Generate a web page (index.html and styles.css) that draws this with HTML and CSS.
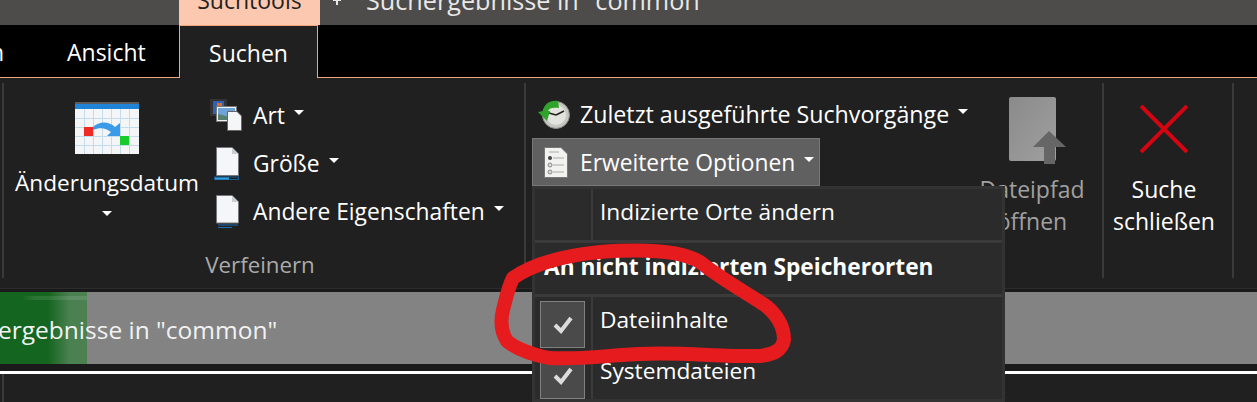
FILE: index.html
```html
<!DOCTYPE html>
<html lang="de">
<head>
    <meta charset="UTF-8">
    <title>Suchtools</title>
    <link rel="stylesheet" href="styles.css">
</head>
<body>
<div class="window">
    <div class="titlebar">
        <div class="context-tab"><span>Suchtools</span></div>
        <svg class="title-mark" width="8" height="5" viewBox="0 0 8 5"><path d="M0 0h8v1H5v4H3V1H0Z" fill="#e8e8e8"/></svg>
        <div class="title-text"><span>Suchergebnisse in "common"</span></div>
    </div>

    <div class="tabs">
        <div class="tab tab-cut">n</div>
        <div class="tab tab-ansicht">Ansicht</div>
        <div class="tab tab-active">Suchen</div>
        <div class="tab-rest"></div>
    </div>

    <div class="ribbon">
        <div class="group group-verfeinern">
            <div class="group-body">
                <div class="big-btn date-btn">
                    <svg class="date-icon" width="64" height="52" viewBox="0 0 64 52">
                        <rect x="0" y="0" width="64" height="52" fill="#f3f5f7"/>
                        <rect x="0" y="0" width="64" height="2" fill="#5b5b5b"/>
                        <rect x="0" y="2" width="64" height="5" fill="#1f83d6"/>
                        <path d="M9.5 7v45M18.5 7v45M27.5 7v45M36.5 7v45M45.5 7v45M54.5 7v45M0 16.5h64M0 25.5h64M0 34.5h64M0 43.5h64" stroke="#c3dcec" fill="none"/>
                        <rect x="9" y="25" width="9" height="9" fill="#ee2a24"/>
                        <rect x="45" y="34" width="9" height="9" fill="#17cb2c"/>
                        <path d="M18 25C24 19 34 19 40 25L45 21V34H32L36 30C31 26 25 25 18 28Z" fill="#3b9be6"/>
                    </svg>
                    <div class="date-label">Änderungsdatum</div>
                    <div class="caret caret-below"></div>
                </div>
                <div class="small-col">
                    <div class="small-btn">
                        <svg class="small-icon" width="32" height="32" viewBox="0 0 32 32">
                            <rect x="0" y="0" width="17" height="17" fill="#333"/>
                            <rect x="3" y="2" width="11" height="13" fill="#2f62b5"/>
                            <rect x="7" y="4" width="5" height="5" fill="#d8702c"/>
                            <rect x="6.5" y="7.5" width="20" height="15" fill="#eef3f8" stroke="#777"/>
                            <rect x="8" y="9" width="17" height="12" fill="#6fa3d8"/>
                            <path d="M8 21L8 15L16 17L25 21Z" fill="#56806f"/>
                            <path d="M17.5 12.5H27L31.5 17V31.5H17.5Z" fill="#f4f6f8" stroke="#666"/>
                        </svg>
                        <span>Art</span><i class="caret"></i>
                    </div>
                    <div class="small-btn">
                        <svg class="small-icon" width="26" height="33" viewBox="0 0 26 33">
                            <path d="M2.5 0.5H18L24.5 7V28.5H2.5Z" fill="#f4f6f9" stroke="#777"/>
                            <path d="M18 0.5V7H24.5Z" fill="#c9ced3"/>
                            <rect x="0.5" y="30" width="24" height="2.5" fill="none" stroke="#1a5c93"/>
                            <rect x="1" y="30.5" width="14" height="2" fill="#2f9fe2"/>
                        </svg>
                        <span>Größe</span><i class="caret"></i>
                    </div>
                    <div class="small-btn">
                        <svg class="small-icon" width="26" height="33" viewBox="0 0 26 33">
                            <path d="M2.5 0.5H18L24.5 7V28H2.5Z" fill="#f4f6f9" stroke="#777"/>
                            <path d="M18 0.5V7H24.5Z" fill="#c9ced3"/>
                            <path d="M4 30h20M4 32.5h14" stroke="#1c6db5" fill="none"/>
                        </svg>
                        <span>Andere Eigenschaften</span><i class="caret"></i>
                    </div>
                </div>
            </div>
            <div class="group-label">Verfeinern</div>
        </div>

        <div class="group group-optionen">
            <div class="wide-col">
                <div class="small-btn btn-recent">
                    <svg class="small-icon" width="33" height="29" viewBox="0 0 33 29">
                        <circle cx="19" cy="15" r="13.5" fill="#c6c6c2" stroke="#8a8a86"/>
                        <circle cx="19" cy="15" r="10" fill="#e4e4df"/>
                        <path d="M19 15L27 11M19 15L12 13" stroke="#222" stroke-width="1.5" fill="none"/>
                        <path d="M21 1C13 0 7 4 6 11L1 12L10 21L13 11L11 11C12 8 16 7 22 8Z" fill="#30a32a"/>
                    </svg>
                    <span>Zuletzt ausgeführte Suchvorgänge</span><i class="caret"></i>
                </div>
                <div class="small-btn btn-open">
                    <svg class="small-icon" width="24" height="31" viewBox="0 0 24 31">
                        <path d="M0.5 0.5H17L23.5 7V30.5H0.5Z" fill="#f2f2f0" stroke="#777"/>
                        <path d="M5 5h10M9 11h11M9 18h11M9 25h11" stroke="#aaa" fill="none"/>
                        <circle cx="6" cy="11" r="2" fill="#444"/>
                        <circle cx="6" cy="18" r="2" fill="#ddd" stroke="#888"/>
                        <circle cx="6" cy="25" r="2" fill="#ddd" stroke="#888"/>
                    </svg>
                    <span>Erweiterte Optionen</span><i class="caret"></i>
                </div>
            </div>
            <div class="pfad-col">
                <svg class="pfad-icon" width="58" height="67" viewBox="0 0 58 67">
                    <defs>
                        <linearGradient id="pfadFill" x1="0" y1="0" x2="1" y2="1">
                            <stop offset="0" stop-color="#8a8a8a"/>
                            <stop offset="1" stop-color="#a0a0a0"/>
                        </linearGradient>
                    </defs>
                    <rect x="1" y="0" width="47" height="64" rx="2" fill="url(#pfadFill)"/>
                    <path d="M25 50L41 34L58 50H47V67H36V50Z" fill="#666"/>
                </svg>
                <div class="pfad-label">Dateipfad<br>öffnen</div>
            </div>
        </div>

        <div class="group group-close">
            <svg class="close-icon" width="48" height="48" viewBox="0 0 48 48">
                <path d="M1 1L47 47M47 1L1 47" stroke="#d40511" stroke-width="4" fill="none"/>
            </svg>
            <div class="close-label">Suche<br>schließen</div>
        </div>
        <div class="group group-end"></div>
    </div>

    <div class="gap-top"></div>
    <div class="address">
        <div class="progress"></div>
        <div class="address-text">ergebnisse in "common"</div>
    </div>
    <div class="gap-bottom"></div>
    <div class="white-line"></div>
    <div class="bottom"><div class="bottom-sep"></div></div>
</div>

<div class="menu">
    <div class="menu-row">
        <div class="menu-gutter"></div>
        <div class="menu-text">Indizierte Orte ändern</div>
    </div>
    <div class="menu-head">An nicht indizierten Speicherorten</div>
    <div class="menu-row">
        <div class="menu-gutter"><div class="check">
            <svg width="20" height="18" viewBox="0 0 20 18"><path d="M2 9L8 15L18 2" stroke="#dcdcdc" stroke-width="4" fill="none"/></svg>
        </div></div>
        <div class="menu-text">Dateiinhalte</div>
    </div>
    <div class="menu-row">
        <div class="menu-gutter"><div class="check">
            <svg width="20" height="18" viewBox="0 0 20 18"><path d="M2 9L8 15L18 2" stroke="#dcdcdc" stroke-width="4" fill="none"/></svg>
        </div></div>
        <div class="menu-text">Systemdateien</div>
    </div>
</div>

<svg class="scribble" width="1257" height="402" viewBox="0 0 1257 402">
    <path d="M513 278C530 266 560 256 600 252C640 249 680 250 700 262C720 278 745 292 766 306C778 316 784 328 784 340C782 350 775 354 760 356C725 357 680 352 640 354C610 355 580 360 549 358C530 354 515 348 507 341C500 330 501 318 503 310C506 298 508 288 513 278Z" stroke="#e51b1e" stroke-width="14" fill="none" stroke-linejoin="round"/>
</svg>
</body>
</html>
```

FILE: styles.css
```css
* {
    box-sizing: border-box;
}
html, body {
    margin: 0;
    padding: 0;
}
body {
    width: 1257px;
    height: 402px;
    overflow: hidden;
    position: relative;
    background: #202020;
    color: #fff;
    font-family: "Open Sans", "Noto Sans", sans-serif;
    font-size: 23px;
}
svg {
    display: block;
    flex: none;
}

/* title bar */
.titlebar {
    height: 25px;
    display: flex;
    overflow: hidden;
    background: #4d4c4a;
}
.context-tab {
    width: 141px;
    margin-left: 179px;
    background: #fcc9b0;
    color: #222;
    text-align: center;
    line-height: 32px;
    margin-top: -16px;
    height: 41px;
}
.title-mark {
    margin-left: 13px;
}
.title-text {
    margin-left: 25px;
    font-size: 25.2px;
    line-height: 32px;
    margin-top: -16px;
    color: #e8e8e8;
}

/* tabs */
.tabs {
    height: 53px;
    display: flex;
    background: #000;
}
.tab {
    line-height: 54px;
    border-bottom: 1px solid #f0a57d;
}
.tab-cut {
    width: 77px;
    margin-left: -10px;
}
.tab-ansicht {
    width: 112px;
}
.tab-active {
    width: 139px;
    background: #202020;
    text-align: center;
    border: 1px solid #f0a57d;
    border-bottom: 0;
}
.tab-rest {
    flex: 1;
    border-bottom: 1px solid #f0a57d;
}

/* ribbon */
.ribbon {
    height: 211px;
    display: flex;
    padding: 5px 0 0 2px;
    background: #202020;
    border-bottom: 1px solid #2c2c2c;
}
.group {
    height: 195px;
    flex: none;
    border-left: 2px solid #3a3a3a;
}
.group-verfeinern {
    width: 522px;
    display: flex;
    flex-direction: column;
}
.group-body {
    display: flex;
    flex: none;
    height: 167px;
}
.big-btn {
    width: 206px;
    display: flex;
    flex-direction: column;
    align-items: center;
}
.date-icon {
    margin-top: 19px;
}
.date-label {
    margin-top: 13px;
    font-size: 22.6px;
    line-height: 32px;
}
.caret {
    display: inline-block;
    width: 0;
    height: 0;
    margin-left: 9px;
    margin-bottom: 6px;
    border-left: 5px solid transparent;
    border-right: 5px solid transparent;
    border-top: 5px solid #fff;
}
.caret-below {
    margin: 12px 0 0;
}
.small-col {
    display: flex;
    flex-direction: column;
    padding-top: 8px;
    font-size: 22.8px;
}
.small-btn {
    height: 48px;
    display: flex;
    align-items: center;
    white-space: nowrap;
}
.small-btn span {
    margin-left: 11px;
}
.small-col .small-btn:nth-child(n+2) .small-icon {
    margin-left: 4px;
}
.small-col .small-btn:nth-child(n+2) span {
    margin-left: 13px;
}
.group-label {
    flex: none;
    text-align: center;
    color: #aaa;
    font-size: 22.3px;
    line-height: 30px;
    padding-right: 8px;
}
.group-optionen {
    width: 578px;
    display: flex;
}
.wide-col {
    width: 436px;
    padding: 7px 0 0 6px;
}
.btn-recent {
    padding-left: 5px;
    font-size: 23.2px;
}
.btn-recent span {
    margin-left: 10px;
}
.btn-open {
    width: 288px;
    padding-left: 11px;
    font-size: 22.8px;
    background: #606060;
    border: 1px solid #777;
}
.btn-open span {
    margin-left: 12px;
}
.pfad-col {
    width: 140px;
    display: flex;
    flex-direction: column;
    align-items: center;
    padding-top: 14px;
    color: #a0a0a0;
    text-align: center;
    line-height: 32px;
}
.pfad-icon {
    margin-left: 9px;
}
.pfad-label {
    margin-top: 9px;
}
.group-close {
    width: 130px;
    display: flex;
    flex-direction: column;
    align-items: center;
    padding: 22px 8px 0 0;
    text-align: center;
    line-height: 32px;
}
.close-label {
    margin-top: 20px;
}
.group-end {
    width: 2px;
}

/* address bar */
.gap-top {
    height: 3px;
    background: #1a1a1a;
}
.address {
    height: 72px;
    display: flex;
    align-items: center;
    position: relative;
    background: #838383;
    color: #f2f2f2;
    font-size: 24.5px;
}
.progress {
    position: absolute;
    left: 0;
    top: 0;
    width: 87px;
    height: 100%;
    background:
        linear-gradient(90deg, transparent 25%, rgba(255, 255, 255, 0.1) 40%) 0 4px / 100% 4px no-repeat,
        linear-gradient(90deg, #14651f 55%, #4b8050 80%);
}
.address-text {
    position: relative;
    margin-left: -2px;
    padding-top: 2px;
}
.gap-bottom {
    height: 7px;
    background: #1a1a1a;
}
.white-line {
    height: 3px;
    background: #fff;
}
.bottom {
    height: 28px;
    background: #202020;
}
.bottom-sep {
    width: 2px;
    height: 100%;
    margin-left: 2px;
    background: #3a3a3a;
}

/* dropdown */
.menu {
    position: absolute;
    left: 532px;
    top: 186px;
    width: 473px;
    height: 216px;
    background: #2b2b2b;
    border: 3px solid #333;
    font-size: 22.7px;
}
.menu-row {
    height: 51px;
    display: flex;
    align-items: center;
}
.menu-gutter {
    width: 58px;
    height: 100%;
    border-right: 2px solid #3a3a3a;
    padding: 4px 5px;
}
.menu-text {
    margin: 0 0 6px 7px;
}
.menu-head {
    height: 57px;
    font-weight: 700;
    line-height: 48px;
    padding-left: 9px;
    border-top: 3px solid #3a3a3a;
    border-bottom: 3px solid #3a3a3a;
}
.check {
    width: 45px;
    height: 47px;
    display: flex;
    align-items: center;
    justify-content: center;
    background: #4a4a4a;
    border: 1px solid #808080;
}
.scribble {
    position: absolute;
    left: 0;
    top: 0;
}
```
